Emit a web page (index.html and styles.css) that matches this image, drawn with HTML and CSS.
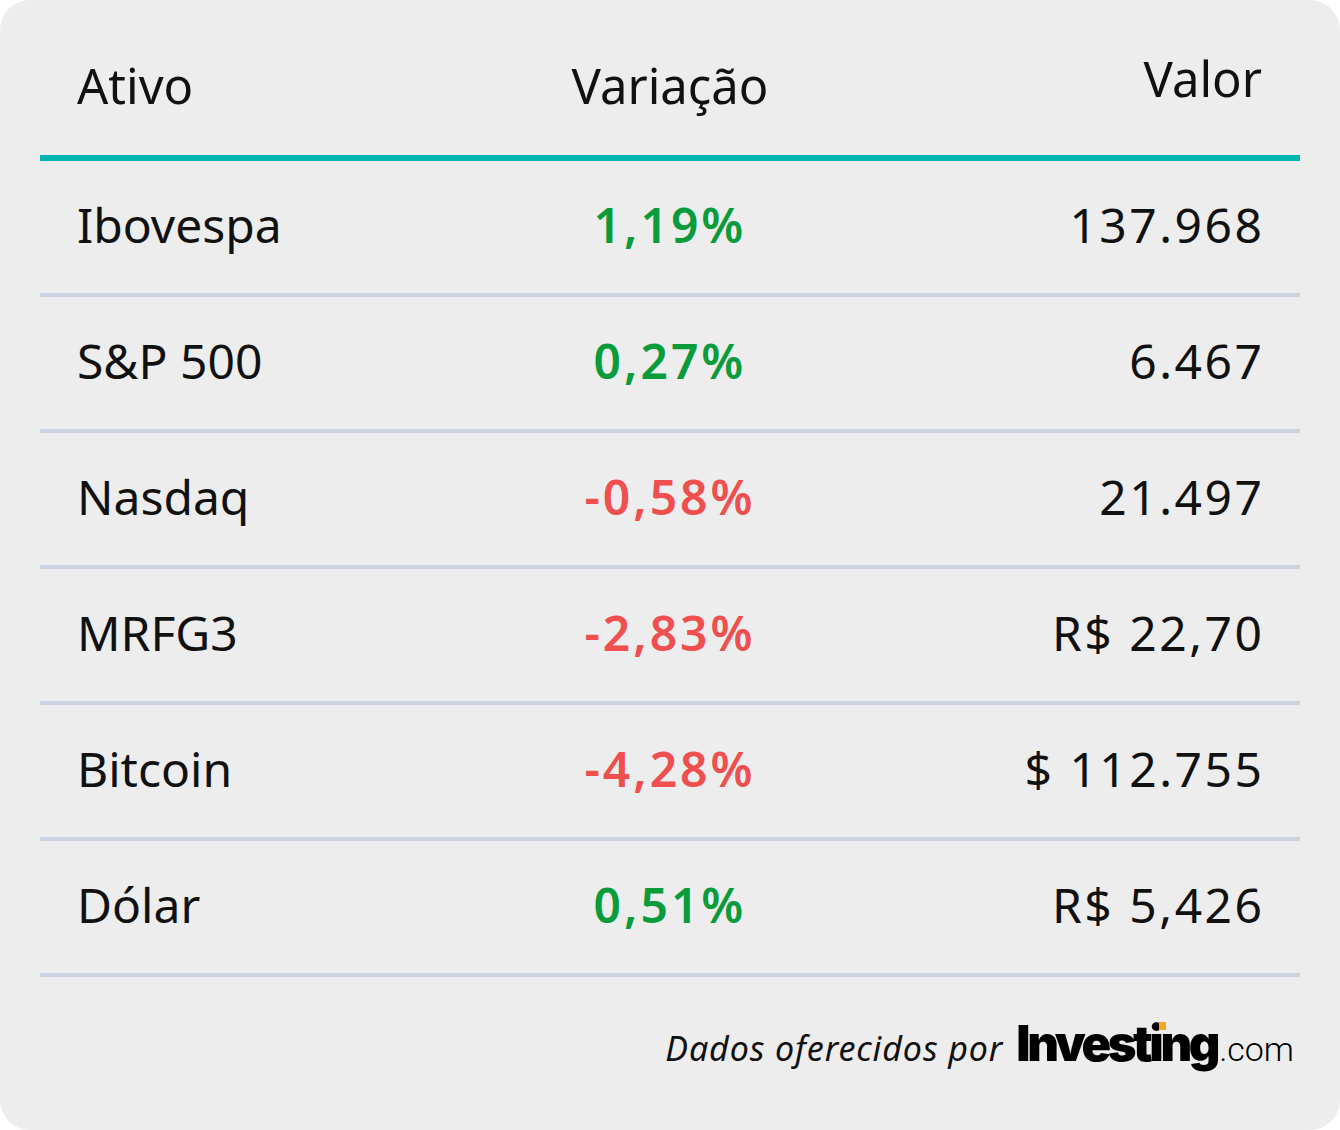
FILE: index.html
```html
<!DOCTYPE html>
<html lang="pt-BR">
<head>
<meta charset="utf-8">
<title>Mercado</title>
<link rel="stylesheet" href="styles.css">
</head>
<body>
<div class="card">
  <div class="thead">
    <div class="c c-left">Ativo</div>
    <div class="c c-mid">Variação</div>
    <div class="c c-right c-valor">Valor</div>
  </div>
  <div class="row">
    <div class="c c-left">Ibovespa</div>
    <div class="c c-mid up">1,19%</div>
    <div class="c c-right num">137.968</div>
  </div>
  <div class="row">
    <div class="c c-left">S&amp;P 500</div>
    <div class="c c-mid up">0,27%</div>
    <div class="c c-right num">6.467</div>
  </div>
  <div class="row">
    <div class="c c-left">Nasdaq</div>
    <div class="c c-mid down">-0,58%</div>
    <div class="c c-right num">21.497</div>
  </div>
  <div class="row">
    <div class="c c-left">MRFG3</div>
    <div class="c c-mid down">-2,83%</div>
    <div class="c c-right num">R$ 22,70</div>
  </div>
  <div class="row">
    <div class="c c-left">Bitcoin</div>
    <div class="c c-mid down">-4,28%</div>
    <div class="c c-right num">$ 112.755</div>
  </div>
  <div class="row">
    <div class="c c-left">Dólar</div>
    <div class="c c-mid up">0,51%</div>
    <div class="c c-right num">R$ 5,426</div>
  </div>
  <div class="footer">
    <span class="credit">Dados oferecidos por</span>
    <span class="logo"><span class="logo-main">Investing<span class="logo-dot"></span></span><span class="logo-com">.com</span></span>
  </div>
</div>
</body>
</html>
```
FILE: styles.css
```css
html, body {
  margin: 0;
  padding: 0;
  background: #ffffff;
}
body {
  font-family: "Noto Sans", "Open Sans", sans-serif;
  color: #111111;
}
.card {
  width: 1340px;
  height: 1130px;
  box-sizing: border-box;
  background: #ededed;
  border-radius: 30px;
  padding: 0 40px;
  display: flex;
  flex-direction: column;
}
.thead {
  height: 155px;
  display: grid;
  grid-template-columns: 1fr 1fr 1fr;
  align-items: end;
  border-bottom: 6px solid #00b5ad;
  font-size: 49px;
  line-height: 1;
}
.thead .c {
  padding-bottom: 45px;
}
.thead .c-valor {
  padding-bottom: 52px;
}
.row {
  height: 132px;
  display: grid;
  grid-template-columns: 1fr 1fr 1fr;
  align-items: center;
  border-bottom: 4px solid #cbd3e1;
  font-size: 48px;
  line-height: 1;
}
.row .c {
  padding-bottom: 4px;
}
.c-left {
  padding-left: 37px;
  text-align: left;
}
.c-mid {
  text-align: center;
}
.c-right {
  padding-right: 38px;
  text-align: right;
}
.num {
  letter-spacing: 2.5px;
  margin-right: -2.5px;
}
.up,
.down {
  font-weight: 600;
  letter-spacing: 3px;
}
.up {
  color: #0a9c3b;
}
.down {
  color: #ef4f4e;
}
.footer {
  display: flex;
  justify-content: flex-end;
  align-items: baseline;
  padding-top: 37px;
  padding-right: 6px;
  gap: 13px;
}
.credit {
  font-style: italic;
  font-size: 34px;
  letter-spacing: 0.9px;
  color: #111111;
}
.logo {
  display: inline-flex;
  align-items: baseline;
}
.logo-main {
  position: relative;
  font-family: "Inter", "Roboto", sans-serif;
  font-weight: 900;
  font-size: 49px;
  letter-spacing: -3.4px;
  color: #000000;
}
.logo-dot {
  position: absolute;
  left: 143px;
  top: 8px;
  width: 7px;
  height: 8px;
  background: #f5a623;
}
.logo-com {
  font-family: "Roboto", "Inter", sans-serif;
  font-weight: 300;
  font-size: 34px;
  color: #000000;
  margin-left: 2px;
}
```
